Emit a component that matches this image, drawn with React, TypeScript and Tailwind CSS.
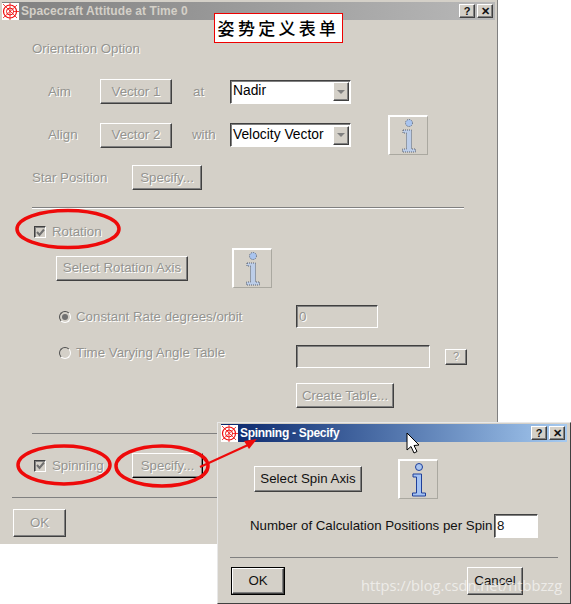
import type { ReactNode } from 'react';

const bevel =
  'border border-t-white border-l-white border-r-[#404040] border-b-[#404040] shadow-[inset_-1px_-1px_0_#808080] bg-[#d4d0c8]';
const sunken =
  'border border-t-[#404040] border-l-[#404040] border-r-white border-b-white shadow-[inset_1px_1px_0_#808080]';
const off = 'text-[#949490] [text-shadow:1px_1px_0_#ffffff]';

function WinIcon() {
  return (
    <svg width="17" height="17" viewBox="0 0 17 17" className="shrink-0 bg-white">
      <circle cx="8" cy="8.5" r="6.5" fill="none" stroke="#f01010" strokeWidth="1.2" />
      <circle cx="8" cy="8.5" r="3.5" fill="none" stroke="#f01010" strokeWidth="1" />
      <path d="M1 1 L15 15 M1 15 L15 2 M8 0 V17 M11 8.5 H17" stroke="#f01010" strokeWidth="0.8" />
    </svg>
  );
}

function InfoGlyph({ off: dim }: { off?: boolean }) {
  const stroke = dim ? '#5a6272' : '#1f3f9a';
  return (
    <svg width="16" height="34" viewBox="0 0 16 34">
      <circle cx="8" cy="4" r="3.5" fill="#a9c4ee" stroke={stroke} strokeDasharray={dim ? '1 1' : undefined} />
      <path
        d="M2 11 H10.5 V30 H14.5 V33 H1.5 V30 H5.5 V14 H2 Z"
        fill={dim ? '#bccde8' : '#a4c2f2'}
        stroke={stroke}
        strokeDasharray={dim ? '1 1' : undefined}
      />
    </svg>
  );
}

function InfoButton({ dim, className }: { dim?: boolean; className?: string }) {
  return (
    <div
      className={`w-10 h-10 flex items-center justify-center bg-[#d4d0c8] border-2 border-t-white border-l-white border-r-[#aaa8a0] border-b-[#aaa8a0] border-r-1 border-b-1 ${className ?? ''}`}
    >
      <InfoGlyph off={dim} />
    </div>
  );
}

function Btn({ children, className, dim = true }: { children: ReactNode; className?: string; dim?: boolean }) {
  return (
    <div className={`${bevel} flex items-center justify-center ${dim ? off : 'text-[#111]'} ${className ?? ''}`}>
      {children}
    </div>
  );
}

function Select({ value }: { value: string }) {
  return (
    <div className={`${sunken} w-[121px] h-[24px] bg-white flex items-center justify-between text-black text-[13.8px]`}>
      <span className="pl-[2px]">{value}</span>
      <div className={`${bevel} w-[16px] h-[19px] mr-[1px] flex items-center justify-center`}>
        <div className="w-0 h-0 border-x-[4px] border-x-transparent border-t-[4px] border-t-[#808080]" />
      </div>
    </div>
  );
}

function Check({ label }: { label: string }) {
  return (
    <div className={`flex items-center gap-[6px] ${off}`}>
      <div className={`${sunken} w-[12px] h-[12px] flex items-center justify-center`}>
        <svg width="9" height="9" viewBox="0 0 9 9">
          <path d="M1 4 L3.5 7 L8 1.5" fill="none" stroke="#707070" strokeWidth="2" />
        </svg>
      </div>
      {label}
    </div>
  );
}

function Radio({ on, label }: { on?: boolean; label: string }) {
  return (
    <div className={`flex items-center gap-[5px] ${off}`}>
      <div className="w-[12px] h-[12px] rounded-full border border-t-[#505050] border-l-[#505050] border-r-white border-b-white flex items-center justify-center">
        {on && <div className="w-[6px] h-[6px] rounded-full bg-[#707070]" />}
      </div>
      {label}
    </div>
  );
}

function Caption({ text, active }: { text: string; active?: boolean }) {
  return (
    <div
      className={`h-[18px] flex items-center ${
        active
          ? 'mx-[3px] bg-gradient-to-r from-[#0a246a] to-[#a6caf0]'
          : 'mx-[2px] bg-gradient-to-r from-[#808080] to-[#b8b8b8]'
      }`}
    >
      <WinIcon />
      <span
        className={`ml-[2px] text-[12px] font-bold ${active ? 'text-white tracking-[-0.3px]' : 'text-[#d4d0c8] tracking-[0.07px]'}`}
      >
        {text}
      </span>
      <div className="ml-auto mr-[2px] flex gap-[2px]">
        <Btn dim={false} className="w-[16px] h-[14px] text-[11px] font-bold">?</Btn>
        <Btn dim={false} className="w-[16px] h-[14px] text-[11px] font-bold">✕</Btn>
      </div>
    </div>
  );
}

function MainWindow() {
  return (
    <div className="absolute left-0 top-0 w-[498px] h-[544px] bg-[#d4d0c8] border-r border-[#808080] pt-[2px]">
      <Caption text="Spacecraft Attitude at Time 0" />
      <div className={`ml-[32px] mt-[21px] leading-[16px] ${off}`}>Orientation Option</div>

      <div className="ml-[48px] mt-[22px] flex items-center h-[25px]">
        <span className={`w-[52px] ${off}`}>Aim</span>
        <Btn className="w-[72px] h-[25px]">Vector 1</Btn>
        <span className={`ml-[21px] w-[37px] ${off}`}>at</span>
        <Select value="Nadir" />
      </div>
      <div className="ml-[48px] mt-[11px] flex items-center h-[40px] relative">
        <span className={`w-[52px] ${off}`}>Align</span>
        <Btn className="w-[72px] h-[25px]">Vector 2</Btn>
        <span className={`ml-[20px] w-[38px] ${off}`}>with</span>
        <Select value="Velocity Vector" />
        <InfoButton dim className="ml-[37px]" />
      </div>
      <div className="ml-[32px] mt-[10px] flex items-center h-[25px]">
        <span className={`w-[100px] ${off}`}>Star Position</span>
        <Btn className="w-[70px] h-[25px]">Specify...</Btn>
      </div>
      <div className="ml-[32px] mt-[17px] w-[432px] h-[2px] bg-[#808080] border-b border-white" />

      <div className="ml-[34px] mt-[15px] h-[16px] flex items-center">
        <Check label="Rotation" />
      </div>
      <div className="ml-[56px] mt-[8px] flex items-center h-[40px]">
        <Btn className="w-[132px] h-[25px]">Select Rotation Axis</Btn>
        <InfoButton dim className="ml-[44px]" />
      </div>

      <div className="ml-[59px] mt-[17px] flex items-center h-[23px]">
        <div className="w-[237px]"><Radio on label="Constant Rate degrees/orbit" /></div>
        <div className={`${sunken} w-[82px] h-[23px] pl-[2px] flex items-center ${off}`}>0</div>
      </div>
      <div className="ml-[59px] mt-[17px] flex items-center h-[23px]">
        <div className="w-[237px] pb-[8px]"><Radio label="Time Varying Angle Table" /></div>
        <div className={`${sunken} w-[134px] h-[23px]`} />
        <Btn className="ml-[15px] w-[22px] h-[16px] text-[11px]">?</Btn>
      </div>
      <Btn className="ml-[296px] mt-[15px] w-[98px] h-[25px]">Create Table...</Btn>

      <div className="ml-[32px] mt-[25px] w-[432px] h-[1px] bg-[#808080]" />
      <div className="ml-[34px] mt-[19px] flex items-center h-[25px]">
        <div className="w-[98px]"><Check label="Spinning" /></div>
        {/* this one has the focus, so its outer edge is darker */}
        <Btn className="w-[71px] h-[25px] border-r-black border-b-black">Specify...</Btn>
      </div>
      <div className="ml-[12px] mt-[19px] w-[472px] h-[1px] bg-[#808080]" />
      <Btn className="ml-[13px] mt-[11px] w-[53px] h-[28px]">OK</Btn>
    </div>
  );
}

function SpinWindow() {
  return (
    <div className="absolute left-[217px] top-[422px] w-[354px] h-[182px] bg-[#d4d0c8] border border-t-[#e8e8e8] border-l-[#e8e8e8] border-r-[#404040] border-b-[#404040] pt-[1px] text-[#111]">
      <Caption text="Spinning - Specify" active />
      <div className="ml-[36px] mt-[17px] flex items-center h-[40px]">
        <Btn dim={false} className="w-[108px] h-[26px]">Select Spin Axis</Btn>
        <InfoButton className="ml-[36px]" />
      </div>
      <div className="ml-[32px] mt-[15px] flex items-center h-[24px]">
        <span className="w-[244px]">Number of Calculation Positions per Spin</span>
        <div className={`${sunken} w-[44px] h-[24px] bg-white pl-[2px] flex items-center`}>8</div>
      </div>
      <div className="ml-[12px] mt-[19px] w-[328px] h-[1px] bg-[#808080]" />
      <div className="ml-[13px] mr-[47px] mt-[9px] flex justify-between">
        <div className="w-[54px] h-[28px] border border-black flex">
          <Btn dim={false} className="flex-1">OK</Btn>
        </div>
        <Btn dim={false} className="w-[56px] h-[28px]">Cancel</Btn>
      </div>
    </div>
  );
}

export default function App() {
  return (
    <div className="relative w-[571px] h-[604px] bg-white overflow-hidden text-[13.3px] font-['Liberation_Sans',Arial,sans-serif]">
      <MainWindow />
      <SpinWindow />

      {/* annotation label */}
      <div className="absolute left-[214px] top-[13px] w-[129px] h-[30px] bg-white border border-[#ee0000] flex items-center justify-center text-black text-[17px] font-medium tracking-[3.3px] font-['Noto_Sans_CJK_SC',sans-serif]">
        姿势定义表单
      </div>

      {/* red marks */}
      <svg className="absolute left-0 top-0 pointer-events-none" width="571" height="604" viewBox="0 0 571 604">
        <g fill="none" stroke="#ee0a0a" strokeWidth="3.5">
          <ellipse cx="68" cy="229" rx="51" ry="18.5" />
          <ellipse cx="64" cy="465" rx="46" ry="19" />
          <ellipse cx="162" cy="466" rx="46" ry="20" />
        </g>
        <path d="M200 467 L248 445" stroke="#ee0a0a" strokeWidth="2" />
        <path d="M257 439 L244 441 L249 449 Z" fill="#ee0a0a" />
        {/* cursor */}
        <path
          d="M407 433 V450 L411 446.5 L414 453 L417 451.5 L414 445.5 L419 445 Z"
          fill="#fff"
          stroke="#000"
        />
      </svg>

      <div className="absolute left-[361px] top-[575px] text-[14.7px] leading-[20px] text-white/60 font-['Open_Sans',sans-serif]">
        https://blog.csdn.net/ntbbzzg
      </div>
    </div>
  );
}
